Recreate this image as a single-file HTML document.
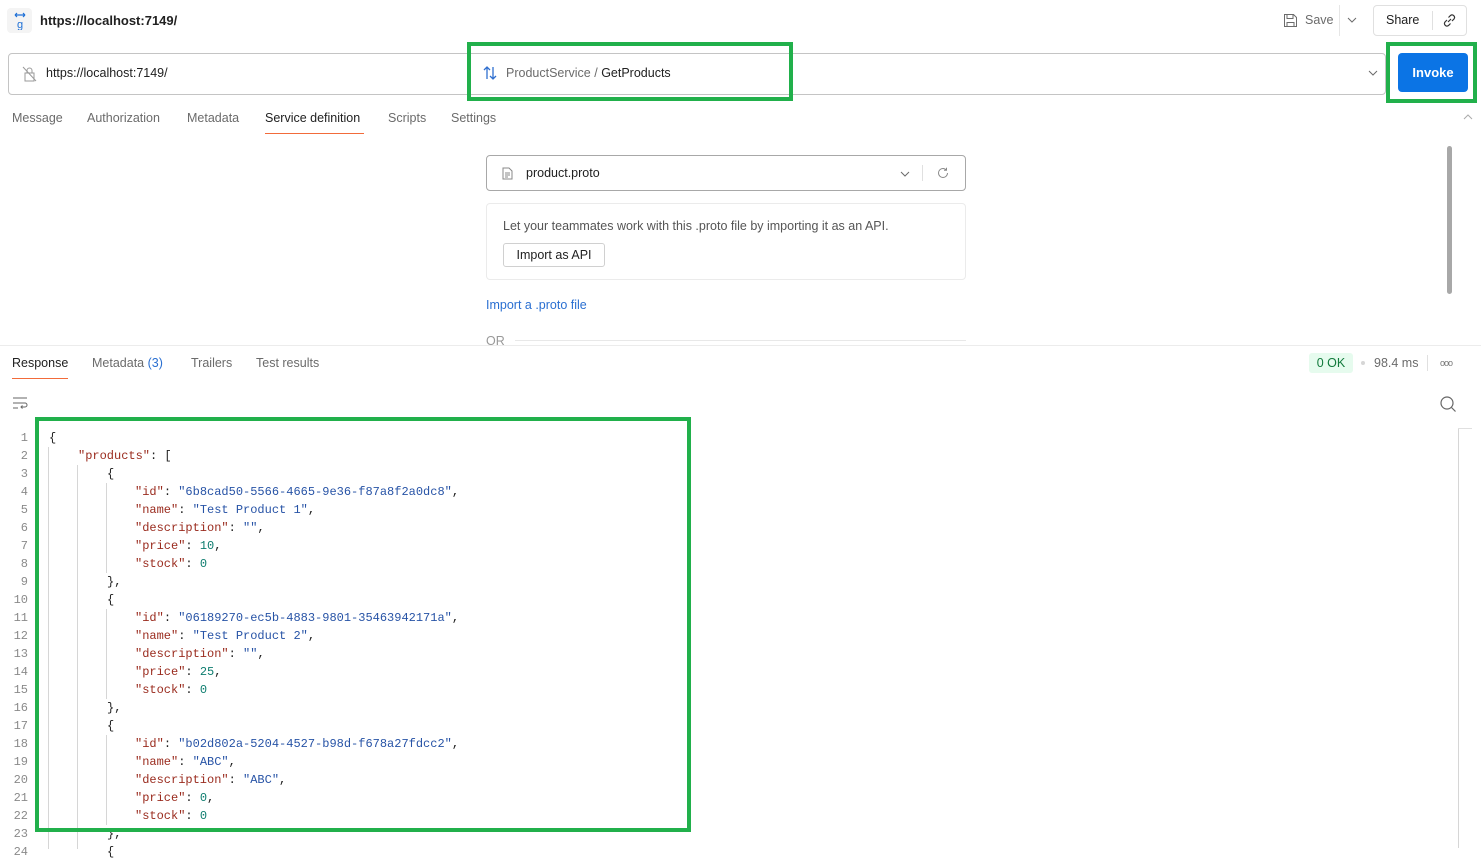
<!DOCTYPE html>
<html><head><meta charset="utf-8">
<style>
*{box-sizing:border-box;margin:0;padding:0}
body{width:1481px;height:848px;overflow:hidden;background:#fff;font-family:"Liberation Sans",sans-serif;color:#212121;position:relative;font-size:13px}
.a{position:absolute;white-space:nowrap}
.tab{position:absolute;font-size:12.5px;color:#6b6b6b}
.code{position:absolute;left:0;font-family:"Liberation Mono",monospace;font-size:12px;line-height:18px}
.ln{position:absolute;width:28px;text-align:right;color:#8a8a8a}
.k{color:#9a2b1e}.s{color:#2753a6}.n{color:#0e7d6f}.p{color:#212121}
.g{position:absolute;border:4px solid #21b04b}
.vl{position:absolute;width:1px;background:#d6d6d6}
</style></head><body>

<div class="a" style="left:7px;top:8px;width:25px;height:25px;border-radius:4px;background:#f4f4f4;"></div>
<svg class="a" style="left:12px;top:12px" width="16" height="18" viewBox="0 0 16 18"><path d="M3 3h10M3 3l2-2M3 3l2 2M13 3l-2-2M13 3l-2 2" stroke="#1d6fd6" stroke-width="1.2" fill="none"/><text x="8" y="16" font-size="11" text-anchor="middle" fill="#1d6fd6" font-family="Liberation Sans">g</text></svg>
<div class="a" style="left:40px;top:13px;font-size:13px;font-weight:bold;color:#212121">https://localhost:7149/</div>

<svg class="a" style="left:1283px;top:13px" width="15" height="15" viewBox="0 0 15 15"><path d="M1.5 1.5h9l3 3v9h-12z M4 1.5v4h6v-4 M4 13.5v-4h7v4" stroke="#6b6b6b" fill="none"/></svg>
<div class="a" style="left:1305px;top:13px;color:#6b6b6b;font-size:12.5px">Save</div>
<div class="a" style="left:1339px;top:5px;width:1px;height:31px;background:#e6e6e6"></div>
<svg class="a" style="left:1347px;top:17px" width="10" height="7"><path d="M1 1l4 4 4-4" stroke="#6b6b6b" fill="none"/></svg>
<div class="a" style="left:1373px;top:5px;width:94px;height:31px;border:1px solid #e0e0e0;border-radius:4px"></div>
<div class="a" style="left:1386px;top:13px;color:#212121;font-size:12.5px">Share</div>
<div class="a" style="left:1432px;top:11px;width:1px;height:19px;background:#e0e0e0"></div>
<svg class="a" style="left:1442px;top:13px" width="15" height="15" viewBox="0 0 15 15"><path d="M6 9l3-3M5 7l-2 2a2.5 2.5 0 003.5 3.5l2-2M10 8l2-2A2.5 2.5 0 008.5 2.5l-2 2" stroke="#333" fill="none" stroke-width="1.2"/></svg>

<div class="a" style="left:8px;top:53px;width:1378px;height:42px;border:1px solid #c4c4c4;border-radius:4px"></div>
<svg class="a" style="left:22px;top:66px" width="15" height="16" viewBox="0 0 15 16"><path d="M3 7h9v8H3z M5 7V4.5a2.5 2.5 0 015 0V7 M1 1l13 14" stroke="#9a9a9a" fill="none"/></svg>
<div class="a" style="left:46px;top:66px;color:#212121;font-size:12.5px">https://localhost:7149/</div>
<svg class="a" style="left:482px;top:65px" width="16" height="16" viewBox="0 0 16 16"><path d="M5 14V2M2 5l3-3 3 3M11 2v12M8 11l3 3 3-3" stroke="#2f6fcf" fill="none" stroke-width="1.3"/></svg>
<div class="a" style="left:506px;top:66px;color:#6b6b6b;font-size:12.5px">ProductService / <span style="color:#212121">GetProducts</span></div>
<svg class="a" style="left:1368px;top:70px" width="10" height="7"><path d="M1 1l4 4 4-4" stroke="#6b6b6b" fill="none"/></svg>
<div class="a" style="left:1398px;top:53px;width:70px;height:39px;background:#0b74e5;border-radius:4px;color:#fff;font-weight:bold;font-size:13px;text-align:center;line-height:39px">Invoke</div>

<div class="tab" style="left:12px;top:111px">Message</div>
<div class="tab" style="left:87px;top:111px">Authorization</div>
<div class="tab" style="left:187px;top:111px">Metadata</div>
<div class="tab" style="left:265px;top:111px;color:#212121">Service definition</div>
<div class="a" style="left:265px;top:133px;width:99px;height:1px;background:#f26b3a"></div>
<div class="tab" style="left:388px;top:111px">Scripts</div>
<div class="tab" style="left:451px;top:111px">Settings</div>
<svg class="a" style="left:1463px;top:114px" width="10" height="6"><path d="M1 5l4-4 4 4" stroke="#aaa" fill="none"/></svg>
<div class="a" style="left:1447px;top:146px;width:5px;height:148px;background:#a8a8a8;border-radius:3px"></div>

<div class="a" style="left:486px;top:155px;width:480px;height:36px;border:1px solid #a8a8a8;border-radius:4px"></div>
<svg class="a" style="left:502px;top:167px" width="11" height="13" viewBox="0 0 11 13"><path d="M1 1h6l3 3v8H1z M3 6h5M3 8h5M3 10h3" stroke="#888" fill="none"/></svg>
<div class="a" style="left:526px;top:166px;color:#212121;font-size:12.5px">product.proto</div>
<svg class="a" style="left:900px;top:171px" width="10" height="6"><path d="M1 1l4 4 4-4" stroke="#6b6b6b" fill="none"/></svg>
<div class="a" style="left:922px;top:165px;width:1px;height:16px;background:#e0e0e0"></div>
<svg class="a" style="left:937px;top:167px" width="12" height="12" viewBox="0 0 12 12"><path d="M10.5 6A4.5 4.5 0 116 1.5c1.5 0 2.6.7 3.4 1.6M9.5 0.8v2.5H7" stroke="#888" fill="none"/></svg>
<div class="a" style="left:486px;top:203px;width:480px;height:77px;border:1px solid #ebebeb;border-radius:4px"></div>
<div class="a" style="left:503px;top:219px;color:#555;font-size:12.5px">Let your teammates work with this .proto file by importing it as an API.</div>
<div class="a" style="left:503px;top:243px;width:102px;height:24px;border:1px solid #d0d0d0;border-radius:3px;text-align:center;line-height:22px;color:#212121;font-size:12.5px">Import as API</div>
<div class="a" style="left:486px;top:298px;color:#2a6fd1;font-size:12.5px">Import a .proto file</div>
<div class="a" style="left:486px;top:334px;color:#999;font-size:12.5px">OR</div>
<div class="a" style="left:515px;top:340px;width:451px;height:1px;background:#e8e8e8"></div>
<div class="a" style="left:0;top:345px;width:1481px;height:1px;background:#ececec"></div>
<div class="a" style="left:0;top:346px;width:1481px;height:502px;background:#fff"></div>

<div class="tab" style="left:12px;top:356px;color:#212121">Response</div>
<div class="a" style="left:12px;top:378px;width:56px;height:1px;background:#f26b3a"></div>
<div class="tab" style="left:92px;top:356px">Metadata <span style="color:#2a6fd1">(3)</span></div>
<div class="tab" style="left:191px;top:356px">Trailers</div>
<div class="tab" style="left:256px;top:356px">Test results</div>
<div class="a" style="left:1309px;top:353px;width:44px;height:20px;background:#e6fbee;border-radius:3px;color:#127a3c;text-align:center;line-height:20px;font-size:12.5px">0 OK</div>
<div class="a" style="left:1361px;top:361px;width:4px;height:4px;background:#d6d6d6;border-radius:2px"></div>
<div class="a" style="left:1374px;top:356px;color:#6b6b6b;font-size:12.5px">98.4 ms</div>
<div class="a" style="left:1427px;top:355px;width:1px;height:16px;background:#e0e0e0"></div>
<div class="a" style="left:1440px;top:358px;color:#777;font-size:9px;letter-spacing:-1px">ooo</div>
<svg class="a" style="left:12px;top:396px" width="16" height="14" viewBox="0 0 16 14"><path d="M1 2h14M1 7h12a2 2 0 010 4H9M10.5 9.5L9 11l1.5 1.5M1 12h5" stroke="#666" fill="none"/></svg>
<svg class="a" style="left:1439px;top:395px" width="18" height="18" viewBox="0 0 18 18"><circle cx="8" cy="8" r="6" stroke="#666" fill="none" stroke-width="1.2"/><path d="M12.5 12.5l4 4" stroke="#666" stroke-width="1.2"/></svg>
<div class="vl" style="left:1458px;top:428px;height:420px"></div>
<div class="a" style="left:1458px;top:428px;width:14px;height:1px;background:#e0e0e0"></div>

<div class="vl" style="left:48px;top:447px;height:402px"></div>
<div class="vl" style="left:77px;top:465px;height:384px"></div>
<div class="vl" style="left:106px;top:483px;height:90px"></div>
<div class="vl" style="left:106px;top:609px;height:90px"></div>
<div class="vl" style="left:106px;top:735px;height:90px"></div>

<div class="code" style="top:429px;width:700px">
<div style="position:relative;height:18px"><span class="ln">1</span><span class="a" style="left:49px" ><span class="p">{</span></span></div>
<div style="position:relative;height:18px"><span class="ln">2</span><span class="a" style="left:78px"><span class="k">"products"</span><span class="p">: [</span></span></div>
<div style="position:relative;height:18px"><span class="ln">3</span><span class="a" style="left:107px"><span class="p">{</span></span></div>
<div style="position:relative;height:18px"><span class="ln">4</span><span class="a" style="left:135px"><span class="k">"id"</span><span class="p">: </span><span class="s">"6b8cad50-5566-4665-9e36-f87a8f2a0dc8"</span><span class="p">,</span></span></div>
<div style="position:relative;height:18px"><span class="ln">5</span><span class="a" style="left:135px"><span class="k">"name"</span><span class="p">: </span><span class="s">"Test Product 1"</span><span class="p">,</span></span></div>
<div style="position:relative;height:18px"><span class="ln">6</span><span class="a" style="left:135px"><span class="k">"description"</span><span class="p">: </span><span class="s">""</span><span class="p">,</span></span></div>
<div style="position:relative;height:18px"><span class="ln">7</span><span class="a" style="left:135px"><span class="k">"price"</span><span class="p">: </span><span class="n">10</span><span class="p">,</span></span></div>
<div style="position:relative;height:18px"><span class="ln">8</span><span class="a" style="left:135px"><span class="k">"stock"</span><span class="p">: </span><span class="n">0</span></span></div>
<div style="position:relative;height:18px"><span class="ln">9</span><span class="a" style="left:107px"><span class="p">},</span></span></div>
<div style="position:relative;height:18px"><span class="ln">10</span><span class="a" style="left:107px"><span class="p">{</span></span></div>
<div style="position:relative;height:18px"><span class="ln">11</span><span class="a" style="left:135px"><span class="k">"id"</span><span class="p">: </span><span class="s">"06189270-ec5b-4883-9801-35463942171a"</span><span class="p">,</span></span></div>
<div style="position:relative;height:18px"><span class="ln">12</span><span class="a" style="left:135px"><span class="k">"name"</span><span class="p">: </span><span class="s">"Test Product 2"</span><span class="p">,</span></span></div>
<div style="position:relative;height:18px"><span class="ln">13</span><span class="a" style="left:135px"><span class="k">"description"</span><span class="p">: </span><span class="s">""</span><span class="p">,</span></span></div>
<div style="position:relative;height:18px"><span class="ln">14</span><span class="a" style="left:135px"><span class="k">"price"</span><span class="p">: </span><span class="n">25</span><span class="p">,</span></span></div>
<div style="position:relative;height:18px"><span class="ln">15</span><span class="a" style="left:135px"><span class="k">"stock"</span><span class="p">: </span><span class="n">0</span></span></div>
<div style="position:relative;height:18px"><span class="ln">16</span><span class="a" style="left:107px"><span class="p">},</span></span></div>
<div style="position:relative;height:18px"><span class="ln">17</span><span class="a" style="left:107px"><span class="p">{</span></span></div>
<div style="position:relative;height:18px"><span class="ln">18</span><span class="a" style="left:135px"><span class="k">"id"</span><span class="p">: </span><span class="s">"b02d802a-5204-4527-b98d-f678a27fdcc2"</span><span class="p">,</span></span></div>
<div style="position:relative;height:18px"><span class="ln">19</span><span class="a" style="left:135px"><span class="k">"name"</span><span class="p">: </span><span class="s">"ABC"</span><span class="p">,</span></span></div>
<div style="position:relative;height:18px"><span class="ln">20</span><span class="a" style="left:135px"><span class="k">"description"</span><span class="p">: </span><span class="s">"ABC"</span><span class="p">,</span></span></div>
<div style="position:relative;height:18px"><span class="ln">21</span><span class="a" style="left:135px"><span class="k">"price"</span><span class="p">: </span><span class="n">0</span><span class="p">,</span></span></div>
<div style="position:relative;height:18px"><span class="ln">22</span><span class="a" style="left:135px"><span class="k">"stock"</span><span class="p">: </span><span class="n">0</span></span></div>
<div style="position:relative;height:18px"><span class="ln">23</span><span class="a" style="left:107px"><span class="p">},</span></span></div>
<div style="position:relative;height:18px"><span class="ln">24</span><span class="a" style="left:107px"><span class="p">{</span></span></div>
</div>

<div class="g" style="left:467px;top:42px;width:326px;height:59px"></div>
<div class="g" style="left:1386px;top:42px;width:91px;height:61px"></div>
<div class="g" style="left:35px;top:417px;width:656px;height:415px"></div>
</body></html>
